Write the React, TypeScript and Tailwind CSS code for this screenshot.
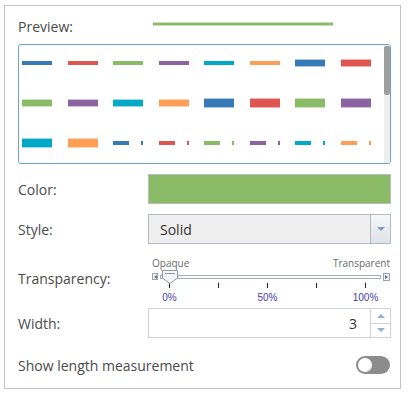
type Swatch = { kind: "line" | "dash"; h: string; bg: string; edge?: string };

const B = "bg-[#377ab8]";
const R = "bg-[#df5651]";
const G = "bg-[#8abc67]";
const P = "bg-[#8c62a0]";
const C = "bg-[#00a9c6]";
const O = "bg-[#ff9e55]";

const swatches: Swatch[] = [
  { kind: "line", h: "h-[4px]", bg: B },
  { kind: "line", h: "h-[4px]", bg: R },
  { kind: "line", h: "h-[4px]", bg: G },
  { kind: "line", h: "h-[4px]", bg: P },
  { kind: "line", h: "h-[4px]", bg: C },
  { kind: "line", h: "h-[4px]", bg: O },
  { kind: "line", h: "h-[8px]", bg: B, edge: "border-y border-[#aac6e2]" },
  { kind: "line", h: "h-[8px]", bg: R, edge: "border-y border-[#f0b3b0]" },
  { kind: "line", h: "h-[8px]", bg: G, edge: "border-y border-[#cde3be]" },
  { kind: "line", h: "h-[8px]", bg: P, edge: "border-y border-[#d2bfdb]" },
  { kind: "line", h: "h-[8px]", bg: C, edge: "border-y border-[#9ddbe7]" },
  { kind: "line", h: "h-[8px]", bg: O, edge: "border-y border-[#ffd3b2]" },
  { kind: "line", h: "h-[10px]", bg: B, edge: "border-y border-[#aac6e2]" },
  { kind: "line", h: "h-[10px]", bg: R, edge: "border-y border-[#f0b3b0]" },
  { kind: "line", h: "h-[10px]", bg: G, edge: "border-y border-[#cde3be]" },
  { kind: "line", h: "h-[10px]", bg: P, edge: "border-y border-[#d2bfdb]" },
  { kind: "line", h: "h-[10px]", bg: C, edge: "border-y border-[#9ddbe7]" },
  { kind: "line", h: "h-[10px]", bg: O, edge: "border-y border-[#ffd3b2]" },
  { kind: "dash", h: "h-[4px]", bg: B },
  { kind: "dash", h: "h-[4px]", bg: R },
  { kind: "dash", h: "h-[4px]", bg: G },
  { kind: "dash", h: "h-[4px]", bg: P },
  { kind: "dash", h: "h-[4px]", bg: C },
  { kind: "dash", h: "h-[4px]", bg: O },
];

function SwatchCell({ s }: { s: Swatch }) {
  if (s.kind === "dash") {
    return (
      <div className="flex items-center w-[30px] h-[20px]">
        <div className={`w-[16px] h-[4px] ${s.bg}`}></div>
        <div className={`ml-[12px] w-[2px] h-[4px] ${s.bg}`}></div>
      </div>
    );
  }
  return (
    <div className="flex items-center w-[30px] h-[20px]">
      <div className={`w-[30px] ${s.h} ${s.bg} ${s.edge ?? ""}`}></div>
    </div>
  );
}

function Label({ children }: { children: React.ReactNode }) {
  return <div className="w-[130px] text-[14px] text-[#4a4a4a]">{children}</div>;
}

const scale = ["0%", "", "50%", "", "100%"];

export default function App() {
  return (
    <div className="w-[411px] h-[394px] bg-white font-['Open_Sans',sans-serif] pt-[5px] pl-[4px]">
      <div className="w-[397px] h-[384px] border border-[#c4c4c4] pl-[13px] pr-[9px]">
        {/* preview */}
        <div className="flex items-center h-[38px]">
          <div className="w-[135px] text-[14px] text-[#4a4a4a] pt-[3px]">Preview:</div>
          <div className="w-[180px] h-[4px] bg-[#8abc67] border-y border-[#c6e0b5] mt-[-3px]"></div>
        </div>

        {/* symbol picker */}
        <div className="flex justify-between w-[373px] h-[120px] border border-[#6aa6c8] rounded-[3px] pl-[3px] overflow-hidden">
          <div className="grid grid-cols-[repeat(8,30px)] gap-x-[15.5px] gap-y-[20px] pt-[8px] content-start">
            {swatches.map((s, i) => (
              <SwatchCell key={i} s={s} />
            ))}
          </div>
          <div className="w-[6px] h-full bg-[#eeeeee]">
            <div className="w-[6px] h-[49px] mt-[1px] bg-[#9e9e9e] rounded-[2px]"></div>
          </div>
        </div>

        {/* color */}
        <div className="flex items-center mt-[10px] h-[30px]">
          <Label>Color:</Label>
          <div className="w-[243px] h-[30px] bg-[#8abc67] border border-[#bcbcbc]"></div>
        </div>

        {/* style */}
        <div className="flex items-center mt-[10px] h-[30px]">
          <Label>Style:</Label>
          <div className="flex w-[243px] h-[30px] bg-[#efefef] border border-[#b2b9c1]">
            <div className="flex-1 flex items-center pl-[11px] text-[14px] text-[#333]">Solid</div>
            <div className="w-[20px] h-full border-l border-[#b2b9c1] bg-gradient-to-b from-[#f6f7f8] to-[#dfe3e7] flex items-center justify-center">
              <div className="w-0 h-0 border-l-[4px] border-r-[4px] border-t-[4px] border-l-transparent border-r-transparent border-t-[#7f9ec4]"></div>
            </div>
          </div>
        </div>

        {/* transparency */}
        <div className="flex items-start mt-[13px]">
          <div className="w-[131px] text-[14px] text-[#4a4a4a] mt-[11px]">Transparency:</div>
          <div className="w-[241px]">
            <div className="flex justify-between text-[10px] leading-[12px] text-[#6a6a6a] pl-[3px]">
              <span>Opaque</span>
              <span>Transparent</span>
            </div>
            <div className="relative flex items-center h-[9px] mt-[3px] pl-[3px]">
              <div className="w-[6px] h-[7px] border border-[#9aa4ae] bg-[#eef1f4] flex items-center justify-center">
                <div className="w-0 h-0 border-t-[2px] border-b-[2px] border-r-[3px] border-t-transparent border-b-transparent border-r-[#5b6f86]"></div>
              </div>
              <div className="flex-1 h-[4px] mx-[2px] border border-[#a3afbd] bg-white"></div>
              <div className="w-[7px] h-[8px] border border-[#9aa4ae] bg-[#eef1f4] flex items-center justify-center">
                <div className="w-0 h-0 border-t-[2px] border-b-[2px] border-l-[3px] border-t-transparent border-b-transparent border-l-[#5b6f86]"></div>
              </div>
              <div className="absolute left-[13px] top-[-2px] w-[16px] h-[14px]">
                <svg width="16" height="14" viewBox="0 0 16 14">
                  <path d="M0.5 0.5 H15.5 V8 L8 13.5 L0.5 8 Z" fill="#f4f6f8" stroke="#8f9aa6" />
                  <line x1="3" y1="3.5" x2="13" y2="3.5" stroke="#8f9aa6" />
                </svg>
              </div>
            </div>
            <div className="flex ml-[-4px] mt-[2px]">
              {scale.map((_, i) => (
                <div key={i} className="w-[49.6px] flex justify-center">
                  <div className="w-[1px] h-[5px] bg-[#222]"></div>
                </div>
              ))}
            </div>
            <div className="flex ml-[-4px] mt-[4px] text-[10px] leading-[11px] text-[#3f3da6] font-['Liberation_Sans',sans-serif]">
              {scale.map((t, i) => (
                <div key={i} className="w-[49.6px] text-center">
                  {t}
                </div>
              ))}
            </div>
          </div>
        </div>

        {/* width */}
        <div className="flex items-center mt-[5px] h-[30px]">
          <Label>Width:</Label>
          <div className="flex w-[243px] h-[30px] bg-white border border-[#cfd3d7]">
            <div className="flex-1 flex items-center justify-end pr-[13px] text-[14px] text-[#333]">3</div>
            <div className="w-[20px] h-full border-l border-[#cfd3d7] flex flex-col">
              <div className="flex-1 flex items-center justify-center border-b border-[#cfd3d7]">
                <div className="w-0 h-0 border-l-[4px] border-r-[4px] border-b-[4px] border-l-transparent border-r-transparent border-b-[#8fb0d6]"></div>
              </div>
              <div className="flex-1 flex items-center justify-center">
                <div className="w-0 h-0 border-l-[4px] border-r-[4px] border-t-[4px] border-l-transparent border-r-transparent border-t-[#8fb0d6]"></div>
              </div>
            </div>
          </div>
        </div>

        {/* show length */}
        <div className="flex items-center justify-between mt-[16px] h-[22px]">
          <div className="text-[14px] text-[#4a4a4a]">Show length measurement</div>
          <div className="w-[34px] h-[18px] rounded-full bg-[#8c8c8c] flex items-center pl-[2px] mr-[1px]">
            <div className="w-[14px] h-[14px] rounded-full bg-white"></div>
          </div>
        </div>
      </div>
    </div>
  );
}
